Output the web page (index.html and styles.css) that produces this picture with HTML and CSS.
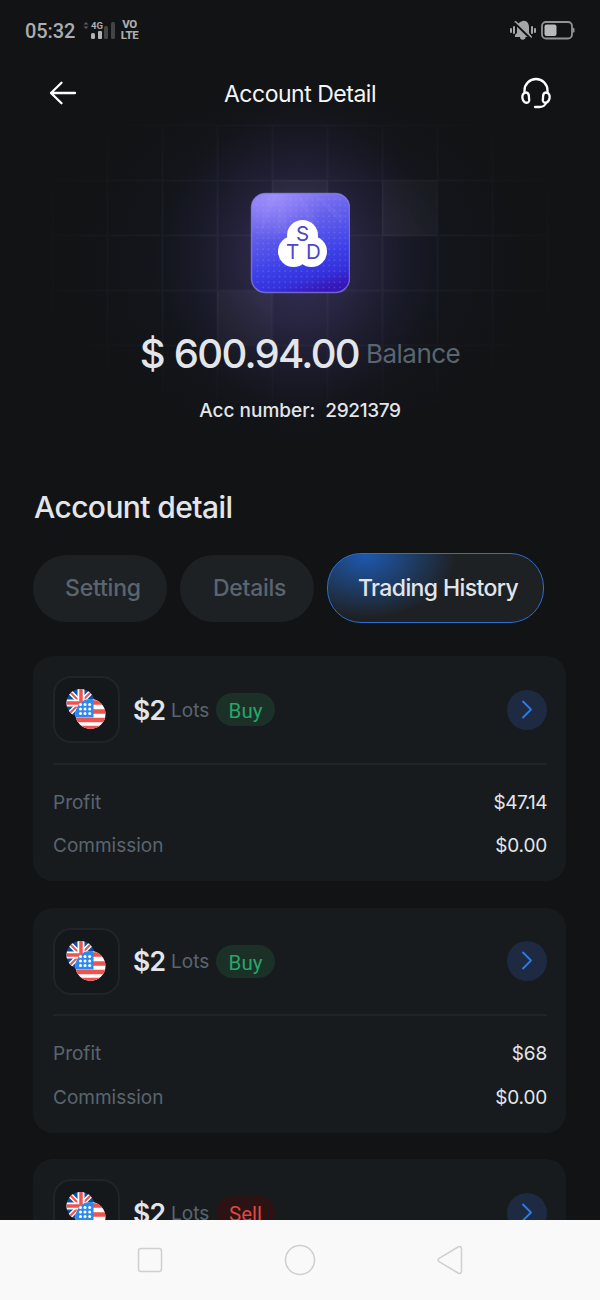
FILE: index.html
```html
<!DOCTYPE html>
<html lang="en">
<head>
<meta charset="utf-8">
<title>Account Detail</title>
<link rel="stylesheet" href="styles.css">
</head>
<body>
<svg class="defs" width="0" height="0" aria-hidden="true">
  <defs>
    <clipPath id="uk"><circle cx="14.500" cy="14" r="14"/></clipPath>
    <clipPath id="us"><circle cx="24.500" cy="25" r="15"/></clipPath>
    <pattern id="dots" width="5.500" height="5.500" patternUnits="userSpaceOnUse"><circle cx="2" cy="2" r=".65" fill="#a9a4ff"/></pattern>
    <linearGradient id="tile" x1="0.350" y1="0" x2="0.650" y2="1">
      <stop offset="0" stop-color="#8d7ff5"/><stop offset=".3" stop-color="#6560ea"/><stop offset=".68" stop-color="#3b3fe8"/><stop offset=".85" stop-color="#3431dc"/><stop offset="1" stop-color="#3716b8"/>
    </linearGradient>
    <radialGradient id="shine" cx=".25" cy="0" r=".5"><stop offset="0" stop-color="#a899ff" stop-opacity=".6"/><stop offset="1" stop-color="#9a88fb" stop-opacity="0"/></radialGradient>
    <symbol id="flags" viewBox="0 0 40 42">
      <g clip-path="url(#uk)">
        <path fill="#0b4ea2" d="M0 0h29v29H0z"/>
        <path d="M1 0l28 28M28 0L0 28" stroke="#fff" stroke-width="5"/>
        <path d="M1 0l28 28M28 0L0 28" stroke="#ef5350" stroke-width="2"/>
        <path d="M15 0v29M0 14h29" stroke="#fff" stroke-width="7"/>
        <path d="M15 0v29M0 14h29" stroke="#ef5350" stroke-width="3.500"/>
      </g>
      <g clip-path="url(#us)">
        <path fill="#fff" d="M9 10h31v31H9z"/>
        <path d="M9 13.500h31M9 22.500h31M9 31h31M9 39h31" stroke="#ef5350" stroke-width="4.500"/>
        <path fill="#3088ea" d="M9 10h18.500v18.500H9z"/>
      </g>
      <g fill="#fff"><circle cx="14.500" cy="15.500" r="1.500"/><circle cx="19" cy="15.500" r="1.500"/><circle cx="23.700" cy="15.500" r="1.500"/><circle cx="14.500" cy="20" r="1.500"/><circle cx="19" cy="20" r="1.500"/><circle cx="23.700" cy="20" r="1.500"/><circle cx="14.500" cy="24.500" r="1.500"/><circle cx="19" cy="24.500" r="1.500"/><circle cx="23.700" cy="24.500" r="1.500"/></g>
    </symbol>
    <symbol id="go" viewBox="0 0 40 40"><circle cx="20" cy="20" r="20" fill="#1d2a42"/><path d="M16 11.500l8 8-8 8" fill="none" stroke="#2e7cea" stroke-width="1.800" stroke-linecap="round" stroke-linejoin="round"/></symbol>
  </defs>
</svg>
<div class="phone">
  <svg class="glow" width="600" height="470" viewBox="0 0 600 470">
    <defs>
      <radialGradient id="halo"><stop offset="0" stop-color="#363058"/><stop offset=".35" stop-color="#2d2949" stop-opacity=".8"/><stop offset=".65" stop-color="#201f34" stop-opacity=".5"/><stop offset="1" stop-color="#121315" stop-opacity="0"/></radialGradient>
      <radialGradient id="wide"><stop offset="0" stop-color="#171829" stop-opacity=".9"/><stop offset=".5" stop-color="#151824" stop-opacity=".7"/><stop offset="1" stop-color="#121315" stop-opacity="0"/></radialGradient>
      <radialGradient id="fade"><stop offset=".3" stop-color="#fff"/><stop offset="1" stop-color="#fff" stop-opacity=".1"/></radialGradient>
      <mask id="edge"><ellipse cx="300" cy="250" rx="300" ry="185" fill="url(#fade)"/></mask>
    </defs>
    <ellipse cx="300" cy="262" rx="255" ry="205" fill="url(#wide)"/>
    <ellipse cx="300" cy="260" rx="155" ry="178" fill="url(#halo)"/>
    <g mask="url(#edge)">
      <path d="M272 180h56v56h-56zM382 180h55v56h-55zM217 291h55v54h-55z" fill="#fff" fill-opacity=".038"/>
      <path d="M107.500 126v276M162.500 126v276M217.500 126v276M272.500 126v276M327.500 126v276M382.500 126v276M437.500 126v276M492.500 126v276M52.500 181v164M547.500 181v164M107 125.500h386M52 180.500h496M52 235.500h496M52 290.500h496M52 345.500h496M107 401.500h386" fill="none" stroke="#8f8fbf" stroke-opacity=".065" stroke-width="2"/>
    </g>
  </svg>
  <div class="status">
    <span class="clock">05:32</span>
    <svg class="signal" width="35" height="20" viewBox="0 0 35 20"><path d="M.5 3.500L3 1l2.500 2.500zM.5 5.500L3 8l2.500-2.500z" fill="#5b5c5e"/><text class="net" x="8" y="8">4G</text><rect x="8" y="12" width="4" height="6" rx="1.500" fill="#b2b3b4"/><rect x="15" y="10" width="4" height="8" rx="1" fill="#b2b3b4"/><rect x="21" y="5" width="4" height="13" rx="1.500" fill="#434446"/><rect x="28" y="1" width="4" height="17" rx="1.500" fill="#434446"/></svg>
    <span class="volte"><span>VO</span><span>LTE</span></span>
    <svg class="bell" width="26" height="21" viewBox="0 0 26 21"><path d="M5 17V15l2-2V7c0-3.500 3-5 5.500-6C17 0 19 4 19 7v6l2 3v1h-5.500a2.500 2.500 0 01-5.500 0z" fill="#a5a6a7"/><path d="M5.500 2L21 17" stroke="#a5a6a7" stroke-width="2" stroke-linecap="round"/><path d="M4.500 3L20.500 18.500" stroke="#121315" stroke-width="1.800"/><path d="M1 9v3M4 7v6M22 7v6M25 9v3" stroke="#a5a6a7" stroke-width="2" stroke-linecap="round"/></svg>
    <svg width="34" height="19" viewBox="0 0 34 19"><rect x="1" y="1" width="30" height="16.500" rx="4" fill="none" stroke="#929394" stroke-width="1.800"/><rect x="3.500" y="3.500" width="12" height="11.500" rx="2" fill="#b8b9ba"/><path d="M31.500 6.500l2 1v3.500l-2 1z" fill="#929394"/></svg>
  </div>
  <header class="top">
    <svg width="28" height="24" viewBox="0 0 28 24"><path d="M12.500 1.800L2 12l10.500 10.200M2 12h24" fill="none" stroke="#fff" stroke-width="2.300" stroke-linecap="round" stroke-linejoin="round"/></svg>
    <h1>Account Detail</h1>
    <svg width="30" height="32" viewBox="0 0 30 32"><g fill="none" stroke="#fff" stroke-width="2.300" stroke-linecap="round"><path d="M3.500 16V13.500a11.500 11.500 0 0123 0v2.500M25 26c-1 3-4 4-7 4h-4"/><path d="M5 15.500c-3 0-4 3-3.500 6 .5 3 3 5 5.500 4 2-.8 1-2.500 1-5 0-3-.8-5-3-5zM25 15.500c3 0 4 3 3.500 6-.5 3-3 5-5.500 4-2-.8-1-2.500-1-5 0-3 .8-5 3-5z"/></g></svg>
  </header>
  <section class="hero">
    <svg width="100" height="102" viewBox="0 0 100 102">
      <rect x="1.500" y="1.500" width="98" height="99" rx="14" fill="url(#tile)"/>
      <rect x="1.500" y="1.500" width="98" height="99" rx="14" fill="url(#shine)"/>
      <path d="M28 2L8 48 18 2zM32 2l6 38-14 2zM48 2l22 30-10 4zM64 2l30 22-3 8z" fill="#c5b7ff" fill-opacity=".06"/>
      <rect x="4" y="4" width="92" height="93" rx="10" fill="url(#dots)" opacity=".5"/>
      <rect x="1.500" y="1.500" width="98" height="99" rx="14" fill="none" stroke="#9188f5" stroke-opacity=".65" stroke-width="1.500"/>
      <g fill="#fff"><circle cx="52.500" cy="43.500" r="15.500"/><circle cx="43.500" cy="59.500" r="15.500"/><circle cx="61.500" cy="59.500" r="15.500"/></g>
      <g class="mono"><text x="52.500" y="48.500">S</text><text x="42.500" y="67">T</text><text x="63.500" y="67">D</text></g>
    </svg>
    <p class="balance"><span class="amount">$ 600.94.00</span><span class="label">Balance</span></p>
    <p class="acc"><span>Acc number:</span><span class="number">2921379</span></p>
  </section>
  <main>
    <h2>Account detail</h2>
    <nav class="tabs"><span class="tab setting">Setting</span><span class="tab details">Details</span><span class="tab active">Trading History</span></nav>
    <article class="card">
      <div class="head"><span class="pair"><svg width="40" height="42"><use href="#flags"/></svg></span><b class="lot">$2</b><span class="lots">Lots</span><span class="side buy">Buy</span><svg class="go" width="40" height="40"><use href="#go"/></svg></div>
      <dl><div><dt>Profit</dt><dd class="tight">$47.14</dd></div><div><dt>Commission</dt><dd>$0.00</dd></div></dl>
    </article>
    <article class="card">
      <div class="head"><span class="pair"><svg width="40" height="42"><use href="#flags"/></svg></span><b class="lot">$2</b><span class="lots">Lots</span><span class="side buy">Buy</span><svg class="go" width="40" height="40"><use href="#go"/></svg></div>
      <dl><div><dt>Profit</dt><dd>$68</dd></div><div><dt>Commission</dt><dd>$0.00</dd></div></dl>
    </article>
    <article class="card">
      <div class="head"><span class="pair"><svg width="40" height="42"><use href="#flags"/></svg></span><b class="lot">$2</b><span class="lots">Lots</span><span class="side sell">Sell</span><svg class="go" width="40" height="40"><use href="#go"/></svg></div>
    </article>
  </main>
</div>
<footer class="keys">
  <svg width="26" height="26" viewBox="0 0 26 26"><rect x="1.500" y="1.500" width="23" height="23" rx="2.500"/></svg>
  <svg width="32" height="32" viewBox="0 0 32 32"><circle cx="16" cy="16" r="14.500"/></svg>
  <svg width="26" height="30" viewBox="0 0 26 30"><path d="M2.500 13.200L21 2q3.500-1.500 3.500 2v22q0 3.500-3.500 2L2.500 16.800q-3-1.800 0-3.600z"/></svg>
</footer>
</body>
</html>
```
FILE: styles.css
```css
* { box-sizing: border-box; margin: 0; padding: 0; }
body { width: 600px; height: 1300px; overflow: hidden; background: #121315; font-family: Inter, "Liberation Sans", sans-serif; color: #e2e6eb; }
svg { display: block; flex: none; }
.defs { position: absolute; }
.phone { position: relative; height: 1220px; overflow: hidden; }
.glow { position: absolute; left: 0; top: 0; }
.status, .top, .hero, main { position: relative; }
.status { display: flex; align-items: center; height: 60px; padding: 0 25px; color: #acadae; }
.clock { width: 58px; font: 500 20px Roboto, sans-serif; letter-spacing: -0.100px; padding-top: 1px; }
.net { font: 700 9.500px Roboto, sans-serif; fill: #acadae; }
.signal { margin-top: 1px; }
.volte { display: flex; flex-direction: column; align-items: center; width: 19px; margin-left: 2px; font: 800 11.500px/11px Roboto, sans-serif; letter-spacing: -0.400px; }
.bell { margin-left: auto; margin-right: 5px; }
.top { display: flex; align-items: center; justify-content: space-between; height: 66px; padding: 0 49px; }
.top h1 { font-size: 23px; font-weight: 400; color: #f5f6f7; letter-spacing: -0.480px; line-height: 32px; padding: 1px 0 0 2px; }
.hero { display: flex; flex-direction: column; align-items: center; padding-top: 66px; height: 354px; }
.mono { font: 400 20.500px Inter, sans-serif; fill: #4947cc; text-anchor: middle; }
.balance { display: flex; align-items: center; gap: 7px; height: 50px; margin-top: 35px; line-height: 50px; white-space: nowrap; }
.amount { font-size: 40px; font-weight: 500; letter-spacing: -1.700px; word-spacing: 1px; }
.label { font-size: 26px; color: #5a6570; letter-spacing: -0.500px; }
.acc { display: flex; gap: 10px; margin-top: 20px; font-size: 19px; font-weight: 500; line-height: 24px; }
.number { letter-spacing: -0.350px; }
main { padding: 0 34px; }
h2 { padding-top: 9px; font-size: 30px; font-weight: 500; line-height: 36px; letter-spacing: -0.600px; white-space: nowrap; }
.tabs { display: flex; align-items: center; gap: 13px; height: 70px; margin: 28px 0 33px -1px; white-space: nowrap; }
.tab { height: 67px; line-height: 67px; border-radius: 34px; background: #1e2124; color: #5a6570; font-size: 23px; font-weight: 500; width: 134px; padding-left: 32px; letter-spacing: -0.200px; }
.details { padding-left: 33px; letter-spacing: -0.300px; }
.active { width: 217px; height: 70px; line-height: 69px; border: 1.500px solid #2b6ed0; padding-left: 30px; letter-spacing: -0.600px; color: #e1e5ea; background: radial-gradient(ellipse 90px 62px at 38px 2px, #1d58ae, #1e4376 40%, transparent 100%), #1e2124; }
.card { height: 225px; margin-bottom: 26.600px; padding: 20px 19px 0 20px; border-radius: 20px; background: #181b1e; margin-left: -1px; }
.head { display: flex; align-items: center; height: 67px; }
.pair { width: 67px; height: 67px; padding: 11px; border: 2px solid #202327; border-radius: 18px; background: #15181a; }
.lot { margin-left: 13px; width: 38px; font-size: 26.500px; font-weight: 600; letter-spacing: -0.800px; }
.lots { width: 45px; color: #5a6570; font-size: 19px; padding-top: 1px; }
.side { width: 59px; height: 33px; border-radius: 17px; font: 400 20.500px/36px Roboto, sans-serif; text-align: center; }
.buy { background: #1b3027; color: #28a56a; }
.sell { background: #2b1213; color: #de4745; }
.go { margin-left: auto; }
dl { margin-top: 19.500px; padding-top: 16px; border-top: 2px solid #202327; }
dl div { display: flex; justify-content: space-between; height: 43.500px; line-height: 43px; font-size: 19px; }
dt { color: #5a6570; }
dd { letter-spacing: -0.200px; }
.tight { letter-spacing: -0.550px; }
.keys { display: flex; justify-content: center; align-items: center; gap: 121px; height: 80px; background: #f9f9f9; }
.keys svg { fill: none; stroke: #cfcfcf; stroke-width: 1.500; }
```
